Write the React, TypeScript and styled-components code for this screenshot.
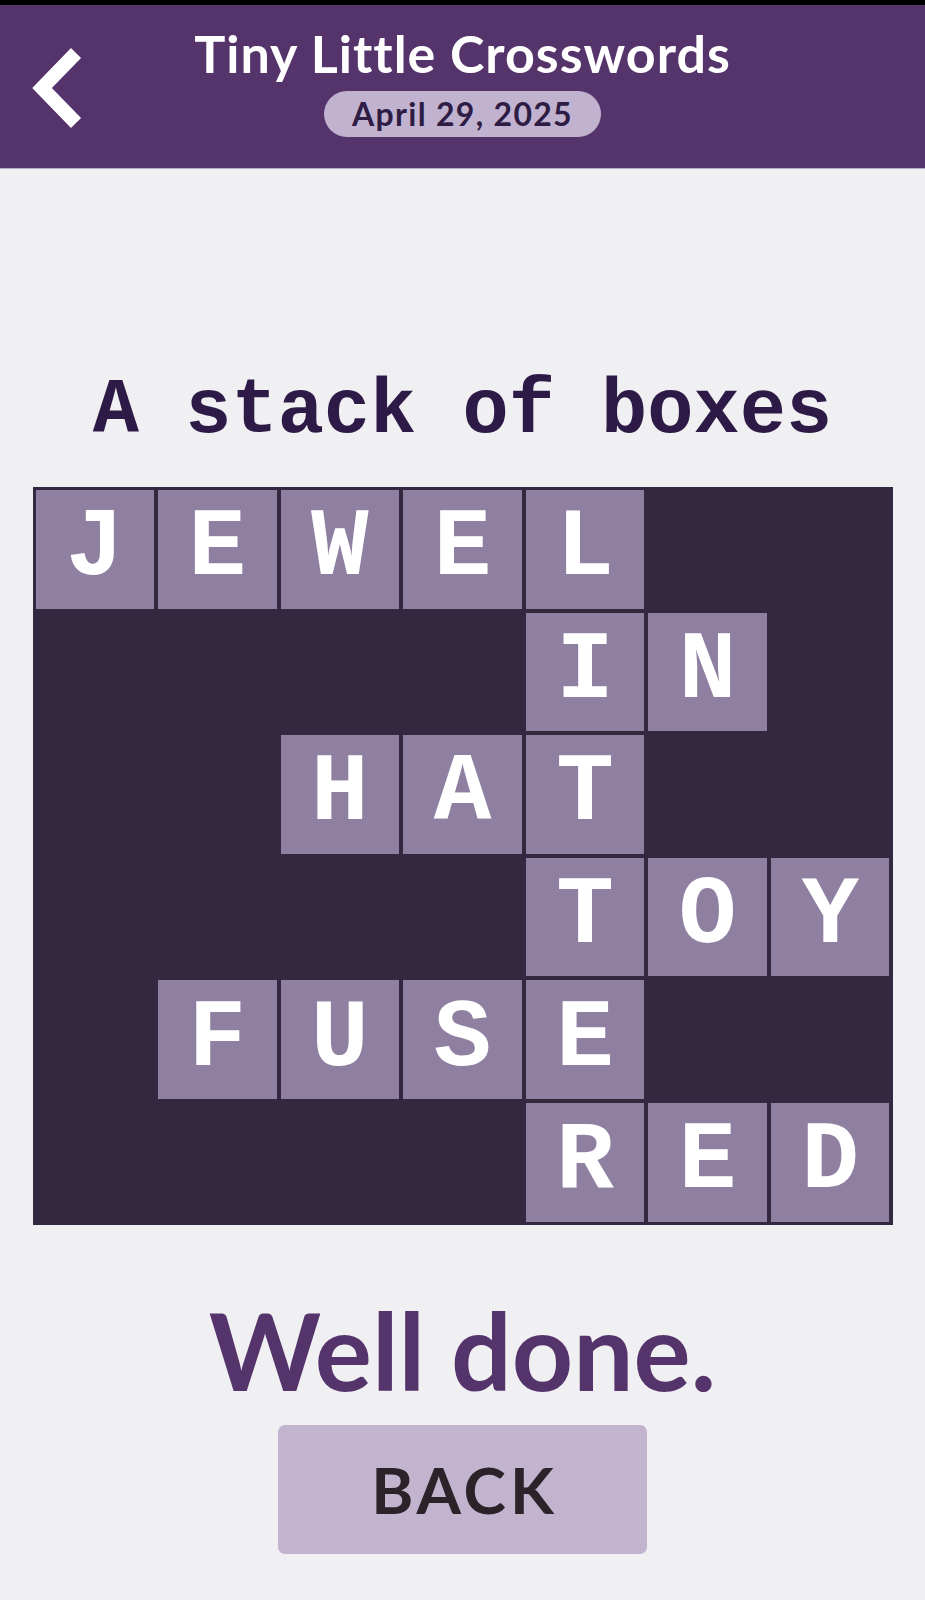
import React from "react";
import styled, { createGlobalStyle } from "styled-components";

const GlobalStyle = createGlobalStyle`
  html, body {
    margin: 0;
    padding: 0;
    background: #f0f0f3;
  }
  body {
    font-family: "Lato", "Noto Sans", sans-serif;
  }
`;

const typewriter = `"Courier New", "Nimbus Mono PS", "FreeMono", "Liberation Mono", monospace`;

const Page = styled.div`
  min-height: 1600px;
  display: flex;
  flex-direction: column;
  background: #f0f0f3;
`;

const Header = styled.header`
  border-top: 5px solid #000;
  background: #55336b;
  height: 163px;
  border-bottom: 1px solid #b9a9cc;
  display: grid;
  grid-template-columns: 1fr auto 1fr;
  align-items: start;
`;

const BackIcon = styled.button`
  justify-self: start;
  margin: 40px 0 0 22px;
  padding: 0;
  border: 0;
  background: none;
  width: 70px;
  height: 90px;
  display: flex;
  cursor: pointer;
`;

const TitleBlock = styled.div`
  display: flex;
  flex-direction: column;
  align-items: center;
  padding-top: 18px;
`;

const Title = styled.h1`
  margin: 0;
  color: #ffffff;
  font-family: "Lato", sans-serif;
  font-weight: 700;
  font-size: 52px;
  line-height: 60px;
  letter-spacing: 1px;
`;

const DatePill = styled.div`
  margin-top: 8px;
  height: 46px;
  padding: 0 28px;
  border-radius: 23px;
  background: #c1b3d0;
  color: #2e1c45;
  font-family: "Lato", sans-serif;
  font-weight: 700;
  font-size: 32px;
  line-height: 46px;
  letter-spacing: 1.3px;
`;

const Main = styled.main`
  display: flex;
  flex-direction: column;
  align-items: center;
`;

const Clue = styled.h2`
  margin: 205px 0 0;
  color: #2d1a47;
  font-family: ${typewriter};
  font-weight: 700;
  font-size: 77px;
  line-height: 76px;
`;

const Board = styled.div`
  margin-top: 37px;
  width: 860px;
  box-sizing: border-box;
  padding: 3px;
  background: #32283f;
  display: grid;
  grid-template-columns: repeat(7, 1fr);
  grid-auto-rows: 118.6px;
  gap: 4px;
`;

const Cell = styled.div<{ $filled: boolean }>`
  background: ${(p) => (p.$filled ? "#8f80a1" : "transparent")};
  color: #ffffff;
  display: flex;
  align-items: center;
  justify-content: center;
  font-family: ${typewriter};
  font-weight: 700;
  font-size: 96px;
  line-height: 1;
`;

const Done = styled.div`
  margin-top: 65px;
  color: #55336b;
  font-family: "Lato", sans-serif;
  font-weight: 700;
  font-size: 107px;
  line-height: 120px;
`;

const BackButton = styled.button`
  margin-top: 15px;
  width: 369px;
  height: 129px;
  border: 0;
  border-radius: 7px;
  background: #c2b4ce;
  color: #2a2329;
  font-family: "Lato", sans-serif;
  font-weight: 700;
  font-size: 64px;
  letter-spacing: 4px;
  padding: 0 0 0 4px;
  cursor: pointer;
`;

const rows = ["JEWEL  ", "    IN ", "  HAT  ", "    TOY", " FUSE  ", "    RED"];

export default function App() {
  return (
    <Page>
      <GlobalStyle />
      <Header>
        <BackIcon aria-label="Back">
          <svg width="70" height="90" viewBox="0 0 70 90">
            <polyline
              points="54,8 20,43 54,78"
              fill="none"
              stroke="#ffffff"
              strokeWidth="14"
              strokeLinejoin="miter"
            />
          </svg>
        </BackIcon>
        <TitleBlock>
          <Title>Tiny Little Crosswords</Title>
          <DatePill>April 29, 2025</DatePill>
        </TitleBlock>
        <div />
      </Header>
      <Main>
        <Clue>A stack of boxes</Clue>
        <Board>
          {rows.flatMap((row, r) =>
            row.split("").map((ch, c) => (
              <Cell key={`${r}-${c}`} $filled={ch !== " "}>
                {ch.trim()}
              </Cell>
            ))
          )}
        </Board>
        <Done>Well done.</Done>
        <BackButton>BACK</BackButton>
      </Main>
    </Page>
  );
}
